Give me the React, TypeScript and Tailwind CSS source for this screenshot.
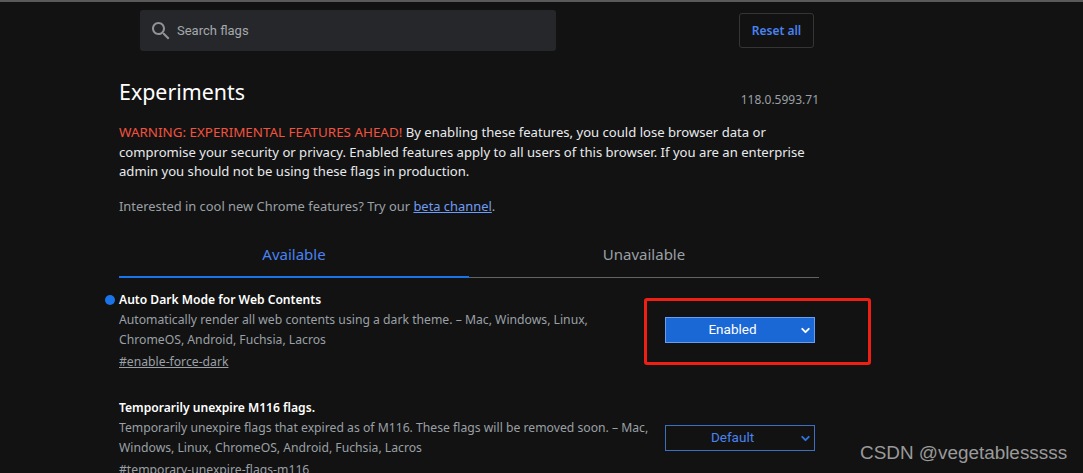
import { ChevronDown } from 'lucide-react';

const bodyFont = "font-['Noto_Sans','Open_Sans',sans-serif]";

type Flag = {
    title: string;
    lines: string[];
    tag: string;
    value: string;
    enabled?: boolean;
};

const flags: Flag[] = [
    {
        title: 'Auto Dark Mode for Web Contents',
        lines: [
            'Automatically render all web contents using a dark theme. – Mac, Windows, Linux,',
            'ChromeOS, Android, Fuchsia, Lacros',
        ],
        tag: '#enable-force-dark',
        value: 'Enabled',
        enabled: true,
    },
    {
        title: 'Temporarily unexpire M116 flags.',
        lines: [
            'Temporarily unexpire flags that expired as of M116. These flags will be removed soon. – Mac,',
            'Windows, Linux, ChromeOS, Android, Fuchsia, Lacros',
        ],
        tag: '#temporary-unexpire-flags-m116',
        value: 'Default',
    },
];

function FlagRow({ flag }: { flag: Flag }) {
    return (
        <div className="relative flex h-[108px] justify-between">
            {flag.enabled ? (
                <span className="absolute left-[-14px] top-[4px] h-[10px] w-[10px] rounded-full bg-[#1a73e8]" />
            ) : null}
            <div className="min-w-0 whitespace-nowrap">
                <h3 className="text-[12.1px] font-semibold leading-[18px] text-white">{flag.title}</h3>
                <div className="mt-[1px] text-[12.2px] leading-[20px] text-[#9aa0a6]">
                    {flag.lines.map((line) => (
                        <p key={line}>{line}</p>
                    ))}
                </div>
                <a className="mt-[2px] block text-[12.2px] leading-[20px] text-[#9aa0a6] underline">{flag.tag}</a>
            </div>
            <div
                className={`relative mr-[4px] mt-[26px] flex h-[26px] w-[150px] shrink-0 items-center justify-center border font-['Roboto',sans-serif] text-[13.5px] ${
                    flag.enabled
                        ? 'border-[#669df6] bg-[#1a67d6] text-white'
                        : 'border-[#3f6fc0] bg-transparent text-[#4a82f0]'
                }`}
            >
                <span className="mr-[15px]">{flag.value}</span>
                <ChevronDown
                    strokeWidth={3.5}
                    className={`absolute right-[2px] top-[6px] h-[13px] w-[13px] ${flag.enabled ? 'text-white' : 'text-[#2f74dc]'}`}
                />
            </div>
        </div>
    );
}

export default function App() {
    return (
        <div className={`relative h-[473px] w-[1083px] overflow-hidden border-t-2 border-[#5a5a5a] bg-[#121212] ${bodyFont}`}>
            <header className="flex items-start pl-[140px] pt-[8px]">
                <div className="flex h-[41px] w-[416px] items-center rounded-[3px] bg-[#25272a] pl-[9px] font-['Roboto',sans-serif] text-[13px] text-[#a5a8ac]">
                    <svg viewBox="0 0 24 24" className="mr-[4px] h-[24px] w-[24px] fill-[#8f9296]">
                        <path d="M15.5 14h-.79l-.28-.27C15.41 12.59 16 11.11 16 9.5 16 5.91 13.09 3 9.5 3S3 5.91 3 9.5 5.91 16 9.5 16c1.61 0 3.09-.59 4.23-1.57l.27.28v.79l5 4.99L20.49 19l-4.99-5zm-6 0C7.01 14 5 11.99 5 9.5S7.01 5 9.5 5 14 7.01 14 9.5 11.99 14 9.5 14z" />
                    </svg>
                    Search flags
                </div>
                <button className="ml-[183px] mt-[3px] h-[35px] w-[75px] rounded-[3px] border border-[#353535] text-[12px] font-semibold text-[#4a82f0]">
                    Reset all
                </button>
            </header>

            <main className="ml-[119px] mt-[26px] w-[700px]">
                <div className="flex items-end justify-between">
                    <h1 className="text-[21.4px] leading-[30px] text-white">Experiments</h1>
                    <span className="mb-[-2px] text-[12px] leading-[18px] text-[#9aa0a6]">118.0.5993.71</span>
                </div>

                <div className="mt-[16px] text-[13.1px] leading-[19.5px] text-[#e8eaed]">
                    <p>
                        <span className="text-[13.4px] text-[#f2533f]">WARNING: EXPERIMENTAL FEATURES AHEAD!</span> By
                        enabling these features, you could lose browser data or compromise your security or privacy.
                        Enabled features apply to all users of this browser. If you are an enterprise admin you should
                        not be using these flags in production.
                    </p>
                    <p className="mt-[15.5px] text-[12.9px] text-[#9aa0a6]">
                        Interested in cool new Chrome features? Try our{' '}
                        <a className="text-[#6f9df5] underline">beta channel</a>.
                    </p>
                </div>

                <div className="mt-[15px] flex text-center text-[15px]">
                    <div className="h-[46px] w-[350px] border-b-2 border-[#1a73e8] pt-[11px] text-[#4a82f0]">Available</div>
                    <div className="h-[46px] w-[350px] border-b border-[#5f6368] pt-[11px] text-[#9aa0a6]">Unavailable</div>
                </div>

                <div className="mt-[13px]">
                    {flags.map((flag) => (
                        <FlagRow key={flag.tag} flag={flag} />
                    ))}
                </div>
            </main>

            <div className="absolute left-[644px] top-[296px] h-[67px] w-[227px] rounded-[3px] border-[3px] border-[#f01f14]" />
            <div className="absolute left-[860px] top-[439px] font-['Liberation_Sans',sans-serif] text-[18.9px] leading-[24px] text-[#9a9a9a]">
                CSDN @vegetablesssss
            </div>
        </div>
    );
}
